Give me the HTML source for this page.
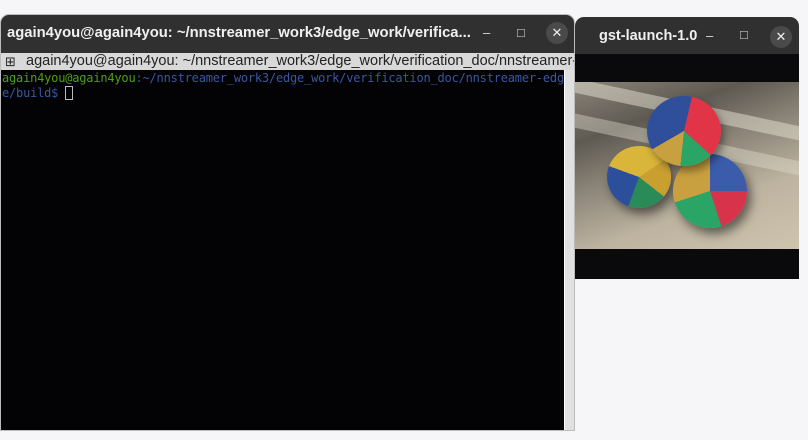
<!DOCTYPE html>
<html><head><meta charset="utf-8"><style>
*{margin:0;padding:0;box-sizing:border-box}
body{width:808px;height:440px;background:#f6f5f7;position:relative;overflow:hidden;font-family:"Liberation Sans","DejaVu Sans",sans-serif}
.term{position:absolute;left:0;top:14px;width:575px;height:417px;background:#303030;border-radius:9px 9px 0 0;overflow:hidden;border:1px solid #bbb}
.tt{position:absolute;left:6px;top:10px;color:#f0f0f0;font-weight:bold;font-size:14.8px;white-space:nowrap}
.ctl{position:absolute;color:#ddd;font-size:13px}
.close{position:absolute;width:22px;height:22px;border-radius:50%;background:#4a4a4a;color:#eee;font-size:13px;text-align:center;line-height:22px}
.tab{position:absolute;left:0;top:38px;width:575px;height:17px;background:#d9d9d9;color:#222;font-size:14.5px;line-height:17px;white-space:nowrap;padding-left:25px}
.scr{position:absolute;left:0;top:55px;width:563px;height:362px;background:#030305;font-family:"DejaVu Sans Mono","Liberation Mono",monospace;font-size:12px;letter-spacing:-0.2px;line-height:15px;padding-top:1px;padding-left:1px;white-space:pre;color:#3a57a0;overflow:hidden}
.sb{position:absolute;left:563px;top:55px;width:12px;height:362px;background:#e0e0e0;border-left:1px solid #fff}
.g{color:#4fa012}
.cur{display:inline-block;width:8px;height:14px;border:1px solid #bbb;vertical-align:-3px}
.gst{position:absolute;left:575px;top:17px;width:224px;height:262px;background:#303030;border-radius:9px 9px 0 0;overflow:hidden}
.vid{position:absolute;left:0;top:37px;width:224px;height:225px;background:#0a0a0c}
.img{position:absolute;left:0;top:28px;width:224px;height:167px;background:linear-gradient(160deg,#8a8378 0%,#5e5a52 25%,#8b8478 45%,#bdb3a0 70%,#cfc4ae 100%);overflow:hidden}
.ball{position:absolute;border-radius:50%}
</style></head><body>
<div class="term">
 <div class="tt">again4you@again4you: ~/nnstreamer_work3/edge_work/verifica...</div>
 <div class="ctl" style="left:482px;top:10px">–</div>
 <div class="ctl" style="left:516px;top:10px">□</div>
 <div class="close" style="left:545px;top:7px">✕</div>
 <div class="tab"><span style="position:absolute;left:4px;top:0;font-size:13px">⊞</span>again4you@again4you: ~/nnstreamer_work3/edge_work/verification_doc/nnstreamer-edge</div>
 <div class="scr"><span class="g">again4you@again4you</span>:~/nnstreamer_work3/edge_work/verification_doc/nnstreamer-edg
e/build$ <span class="cur"></span></div>
 <div class="sb"></div>
</div>
<div class="gst">
 <div class="tt" style="left:24px;top:11px;font-size:14.5px">gst-launch-1.0</div>
 <div class="ctl" style="left:131px;top:11px">–</div>
 <div class="ctl" style="left:165px;top:10px">□</div>
 <div class="close" style="left:195px;top:9px">✕</div>
 <div class="vid"><div class="img">
  <div style="position:absolute;left:-20px;top:20px;width:260px;height:14px;background:rgba(230,225,210,.5);transform:rotate(12deg)"></div>
  <div style="position:absolute;left:-20px;top:55px;width:260px;height:14px;background:rgba(230,225,210,.4);transform:rotate(12deg)"></div>
  <div class="ball" style="left:32px;top:64px;width:64px;height:62px;background:conic-gradient(from 200deg,#2b4f9a 0 25%,#d9b63a 25% 60%,#c9a030 60% 80%,#2a8a58 80%);box-shadow:4px 6px 10px rgba(0,0,0,.5)"></div>
  <div class="ball" style="left:98px;top:72px;width:74px;height:74px;background:conic-gradient(from 0deg,#3b5bab 0 25%,#d7334a 25% 45%,#2aa566 45% 70%,#c9a040 70%);box-shadow:4px 6px 10px rgba(0,0,0,.5)"></div>
  <div class="ball" style="left:72px;top:14px;width:74px;height:70px;background:conic-gradient(from 330deg,#2f4f9a 0 12%,#e23447 12% 45%,#2aa566 45% 60%,#c9a040 60% 75%,#2f4f9a 75%);box-shadow:3px 5px 8px rgba(0,0,0,.4)"></div>
 </div></div>
</div>
</body></html>
